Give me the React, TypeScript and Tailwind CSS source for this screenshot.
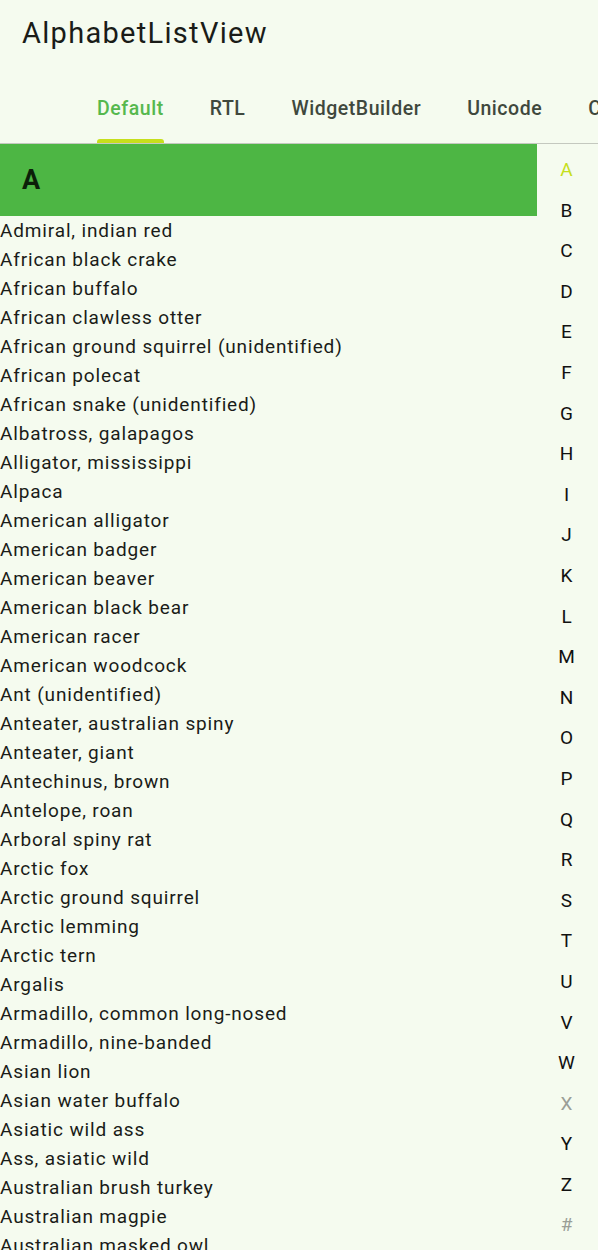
// alphabet list view page
import React from "react"

const tabs = ["Default", "RTL", "WidgetBuilder", "Unicode", "Custom"]

const animals = [
  "Admiral, indian red",
  "African black crake",
  "African buffalo",
  "African clawless otter",
  "African ground squirrel (unidentified)",
  "African polecat",
  "African snake (unidentified)",
  "Albatross, galapagos",
  "Alligator, mississippi",
  "Alpaca",
  "American alligator",
  "American badger",
  "American beaver",
  "American black bear",
  "American racer",
  "American woodcock",
  "Ant (unidentified)",
  "Anteater, australian spiny",
  "Anteater, giant",
  "Antechinus, brown",
  "Antelope, roan",
  "Arboral spiny rat",
  "Arctic fox",
  "Arctic ground squirrel",
  "Arctic lemming",
  "Arctic tern",
  "Argalis",
  "Armadillo, common long-nosed",
  "Armadillo, nine-banded",
  "Asian lion",
  "Asian water buffalo",
  "Asiatic wild ass",
  "Ass, asiatic wild",
  "Australian brush turkey",
  "Australian magpie",
  "Australian masked owl",
]

const letters = "ABCDEFGHIJKLMNOPQRSTUVWXYZ#".split("")
const disabled = ["X", "#"]

export default function App() {
  return (
    <div
      className="h-[1250px] overflow-hidden bg-[#f5fbef] text-[#1a1c18]"
      style={{ fontFamily: "Roboto, 'Noto Sans', sans-serif" }}
    >
      {/* App bar */}
      <div className="h-[66px] flex items-center pl-[22px] text-[29px] tracking-[1.3px] leading-none">
        AlphabetListView
      </div>

      {/* Tabs */}
      <div className="h-[78px] border-b border-[#c4c8bf] flex items-end overflow-hidden whitespace-nowrap pl-[97px] gap-[46px]">
        {tabs.map((t, i) => (
          <div key={t} className="flex flex-col items-stretch">
            <span
              className={
                "text-[19.5px] font-medium tracking-[0.55px] leading-[24px] " +
                (i === 0 ? "text-[#56b84e]" : "text-[#3f483d]")
              }
            >
              {t}
            </span>
            <div
              className={
                "mt-[18px] h-[4px] rounded-t-[3px] " +
                (i === 0 ? "bg-[#c6df1c]" : "bg-transparent")
              }
            />
          </div>
        ))}
      </div>

      {/* Body */}
      <div className="flex">
        <div className="flex-1 min-w-0">
          <div className="h-[72px] bg-[#4db644] flex items-center pl-[22px] text-[27px] font-bold text-[#0c1f09]">
            A
          </div>
          {animals.map((a) => (
            <div key={a} className="h-[29px] flex items-center text-[19px] tracking-[0.85px] leading-none whitespace-nowrap">
              {a}
            </div>
          ))}
        </div>

        <div className="w-[61px] pt-[6px] flex flex-col">
          {letters.map((l, i) => (
            <div
              key={l}
              className={
                "h-[40.6px] flex items-center justify-center pr-[2px] text-[19px] " +
                (i === 0
                  ? "text-[#c6df1c]"
                  : disabled.includes(l)
                  ? "text-[#9a9e97]"
                  : "text-[#111]")
              }
            >
              {l}
            </div>
          ))}
        </div>
      </div>
    </div>
  )
}
